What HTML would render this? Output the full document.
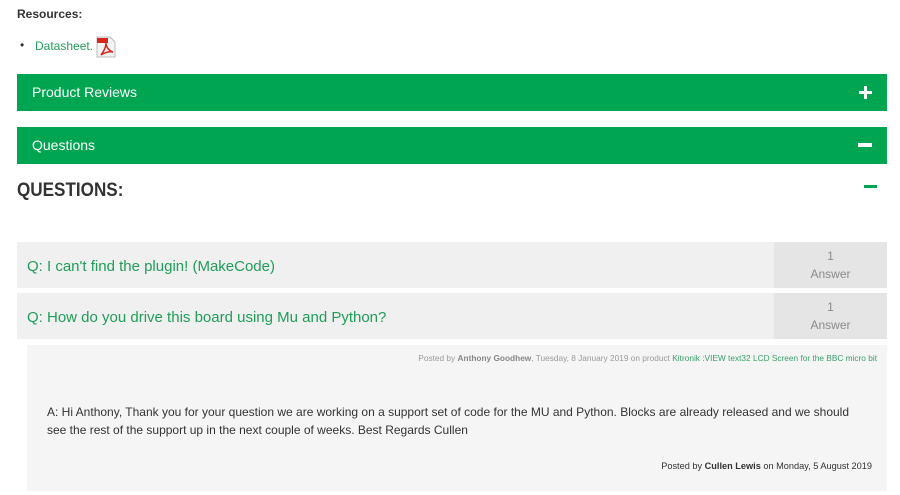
<!DOCTYPE html>
<html><head><style>
*{margin:0;padding:0;box-sizing:border-box}
body{width:900px;height:495px;background:#fff;font-family:"Liberation Sans",Arial,sans-serif;position:relative;overflow:hidden;color:#333}
.a{position:absolute}
.bar{position:absolute;left:17px;width:870px;height:37px;background:#00a551;color:#fff;font-size:14px;line-height:37px;padding-left:15px}
.row{position:absolute;left:17px;width:870px;height:46px;background:#f0f0f0}
.row .q{position:absolute;left:10px;top:2px;line-height:46px;font-size:15px;color:#1e9e58}
.row .n{position:absolute;right:0;top:0;width:113px;height:46px;background:#e5e5e5;color:#8a8a8a;font-size:12px;text-align:center;padding-top:5px;line-height:18px}
</style></head><body>
<div class="a" style="left:17px;top:7px;font-size:12px;font-weight:bold;color:#333">Resources:</div>
<div class="a" style="left:20px;top:38px;font-size:12px;color:#333">•</div>
<div class="a" style="left:35px;top:39px;font-size:12px;color:#1e9e58">Datasheet.</div>
<svg class="a" style="left:96px;top:36px" width="20" height="22" viewBox="0 0 20 22"><path d="M1 1h13l5 5v15H1z" fill="#f4f4f4" stroke="#bbb"/><rect x="1" y="2" width="11" height="5" fill="#d9261c"/><path d="M5 19c3-4 5-8 5-12c0 4 3 8 7 9c-5-1-9 1-12 3z" fill="none" stroke="#d9261c" stroke-width="1.5"/></svg>
<div class="bar" style="top:74px">Product Reviews</div>
<div class="a" style="left:859px;top:86px;width:13px;height:13px"><div class="a" style="left:5px;top:0;width:3px;height:13px;background:#fff"></div><div class="a" style="left:0;top:5px;width:13px;height:3px;background:#fff"></div></div>
<div class="bar" style="top:127px">Questions</div>
<div class="a" style="left:858px;top:143px;width:14px;height:4px;background:#fff"></div>
<div class="a" style="left:17px;top:180px;font-family:'Liberation Sans',sans-serif;font-weight:bold;font-size:19px;color:#333;transform:scaleX(0.9);transform-origin:left top">QUESTIONS:</div>
<div class="a" style="left:864px;top:185px;width:13px;height:3px;background:#00a551"></div>
<div class="row" style="top:242px"><div class="q">Q: I can't find the plugin! (MakeCode)</div><div class="n">1<br>Answer</div></div>
<div class="row" style="top:293px"><div class="q">Q: How do you drive this board using Mu and Python?</div><div class="n">1<br>Answer</div></div>
<div class="a" style="left:27px;top:345px;width:860px;height:146px;background:#f5f5f5"></div>
<div class="a" style="right:23px;top:353px;font-size:8.3px;color:#999;white-space:nowrap">Posted by <b style="color:#888">Anthony Goodhew</b>, Tuesday, 8 January 2019 on product <span style="color:#3aa06a">Kitronik :VIEW text32 LCD Screen for the BBC micro bit</span></div>
<div class="a" style="left:47px;top:403px;width:820px;font-size:12px;line-height:18px;color:#333">A: Hi Anthony, Thank you for your question we are working on a support set of code for the MU and Python. Blocks are already released and we should see the rest of the support up in the next couple of weeks. Best Regards Cullen</div>
<div class="a" style="right:28px;top:461px;font-size:9.2px;color:#333;white-space:nowrap">Posted by <b>Cullen Lewis</b> on Monday, 5 August 2019</div>
</body></html>
